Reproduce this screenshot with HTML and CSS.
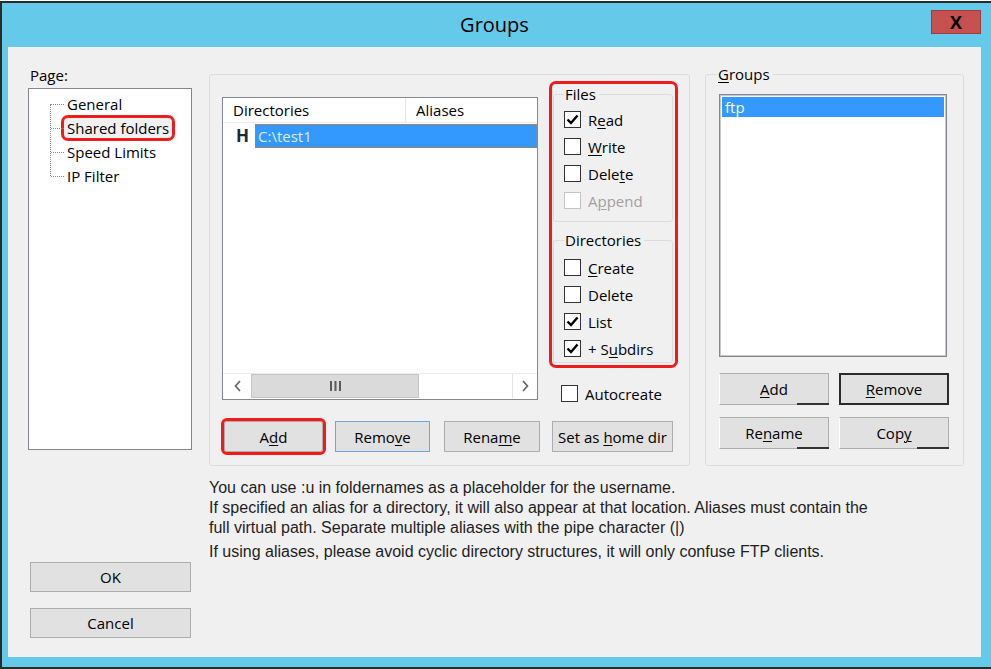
FILE: index.html
```html
<!DOCTYPE html>
<html lang="en">
<head>
  <meta charset="UTF-8" />
  <meta name="viewport" content="width=device-width, initial-scale=1.0"/>
  <title>Groups</title>
  <link rel="stylesheet" href="styles.css">
</head>
<body>
  <div class="window">
    <div class="titlebar">
      <span class="title">Groups</span>
      <button class="close">X</button>
    </div>

    <div class="client">
      <!-- page tree + dialog buttons -->
      <div class="sidebar">
        <div class="page-label">Page:</div>
        <div class="tree">
          <ul>
            <li>General</li>
            <li><span class="current marked">Shared folders</span></li>
            <li>Speed Limits</li>
            <li>IP Filter</li>
          </ul>
        </div>
        <button class="btn ok">OK</button>
        <button class="btn cancel">Cancel</button>
      </div>

      <div class="main">
        <div class="panels">
          <!-- shared folders page -->
          <div class="box folders">
            <div class="folders-top">
              <div class="listview">
                <div class="lv-head">
                  <div class="col dir">Directories</div>
                  <div class="col alias">Aliases</div>
                </div>
                <div class="lv-body">
                  <div class="lv-row">
                    <span class="home">H</span>
                    <span class="cell selected">C:\test1</span>
                  </div>
                </div>
                <div class="hscroll">
                  <span class="sb-arrow">
                    <svg width="8" height="12" viewBox="0 0 8 12"><polyline points="6,1 1.5,6 6,11" fill="none" stroke="#606060" stroke-width="1.6"/></svg>
                  </span>
                  <span class="sb-thumb">
                    <svg width="11" height="10" viewBox="0 0 11 10"><rect x="0" y="0" width="2" height="10" fill="#5a5a5a"/><rect x="4.5" y="0" width="2" height="10" fill="#5a5a5a"/><rect x="9" y="0" width="2" height="10" fill="#5a5a5a"/></svg>
                  </span>
                  <span class="sb-track"></span>
                  <span class="sb-arrow right">
                    <svg width="8" height="12" viewBox="0 0 8 12"><polyline points="2,1 6.5,6 2,11" fill="none" stroke="#606060" stroke-width="1.6"/></svg>
                  </span>
                </div>
              </div>

              <div class="side">
                <div class="perms marked">
                  <fieldset class="perm-group files">
                    <legend>Files</legend>
                    <label class="check"><span class="cb"><svg width="15" height="15" viewBox="0 0 15 15"><polyline points="2.5,7.5 6,11 12.5,3.5" fill="none" stroke="#000" stroke-width="2.4"/></svg></span>R<u>e</u>ad</label>
                    <label class="check"><span class="cb"></span><u>W</u>rite</label>
                    <label class="check"><span class="cb"></span>Dele<u>t</u>e</label>
                    <label class="check disabled"><span class="cb"></span>A<u>p</u>pend</label>
                  </fieldset>
                  <fieldset class="perm-group dirs">
                    <legend>Directories</legend>
                    <label class="check"><span class="cb"></span><u>C</u>reate</label>
                    <label class="check"><span class="cb"></span>Delete</label>
                    <label class="check"><span class="cb"><svg width="15" height="15" viewBox="0 0 15 15"><polyline points="2.5,7.5 6,11 12.5,3.5" fill="none" stroke="#000" stroke-width="2.4"/></svg></span>List</label>
                    <label class="check"><span class="cb"><svg width="15" height="15" viewBox="0 0 15 15"><polyline points="2.5,7.5 6,11 12.5,3.5" fill="none" stroke="#000" stroke-width="2.4"/></svg></span>+ S<u>u</u>bdirs</label>
                  </fieldset>
                </div>
                <label class="check autocreate"><span class="cb"></span>Autocreate</label>
              </div>
            </div>

            <div class="folder-buttons">
              <button class="btn add marked">A<u>d</u>d</button>
              <button class="btn remove">Remo<u>v</u>e</button>
              <button class="btn rename">Rena<u>m</u>e</button>
              <button class="btn home-dir">Set as <u>h</u>ome dir</button>
            </div>
          </div>

          <!-- group list -->
          <fieldset class="box groups">
            <legend><u>G</u>roups</legend>
            <div class="listbox">
              <div class="lb-item selected">ftp</div>
            </div>
            <div class="group-buttons">
              <button class="btn stale"><u>A</u>dd</button>
              <button class="btn default"><u>R</u>emove</button>
              <button class="btn stale">Re<u>n</u>ame</button>
              <button class="btn stale">Cop<u>y</u></button>
            </div>
          </fieldset>
        </div>

        <div class="notes">
          <p>You can use :u in foldernames as a placeholder for the username.</p>
          <p>If specified an alias for a directory, it will also appear at that location. Aliases must contain the full virtual path. Separate multiple aliases with the pipe character (|)</p>
          <p class="gap">If using aliases, please avoid cyclic directory structures, it will only confuse FTP clients.</p>
        </div>
      </div>
    </div>
  </div>
</body>
</html>
```

FILE: styles.css
```css
body {
  margin: 0;
  background: #fff;
  font-family: "Open Sans", sans-serif;
  font-size: 15px;
  color: #000;
}
.window {
  box-sizing: border-box;
  width: 991px;
  height: 668px;
  margin-top: 1px;
  background: #65c9ea;
  border-top: 2px solid #2b2b2b;
  border-left: 2px solid #2b2b2b;
  border-bottom: 2px solid #2b2b2b;
  padding: 0 10px 10px 6px;
}
.titlebar {
  height: 44px;
  display: grid;
  grid-template-columns: 1fr auto 1fr;
}
.title {
  grid-column: 2;
  font-size: 20px;
  line-height: 44px;
}
.close {
  grid-column: 3;
  justify-self: end;
  align-self: start;
  width: 50px;
  height: 24px;
  margin-top: 7px;
  padding: 0;
  background: #c75050;
  border: 1px solid #a13c3c;
  font-family: "Open Sans", sans-serif;
  font-weight: bold;
  font-size: 18px;
  line-height: 20px;
  color: #000;
}
.client {
  box-sizing: border-box;
  height: 610px;
  background: #f0f0f0;
  display: flex;
  gap: 17px;
  padding: 18px 17px 19px 20px;
}
button {
  font-family: "Open Sans", sans-serif;
  font-size: 15px;
  color: #000;
}
.btn {
  display: block;
  box-sizing: border-box;
  padding: 0;
  background: #e1e1e1;
  border: 1px solid #adadad;
}
u {
  text-decoration-thickness: 1px;
  text-underline-offset: 2px;
}
.marked {
  outline: 3px solid #f01c1c;
  border-radius: 4px;
}

/* sidebar */
.sidebar {
  width: 164px;
  flex-shrink: 0;
}
.page-label {
  line-height: 20px;
  padding-left: 2px;
}
.tree {
  box-sizing: border-box;
  height: 362px;
  margin-top: 3px;
  padding-top: 3px;
  background: #fff;
  border: 1px solid #828790;
}
.tree ul {
  list-style: none;
  margin: 0;
  padding: 0 0 0 38px;
  position: relative;
}
.tree ul::before {
  content: "";
  position: absolute;
  left: 21px;
  top: 12px;
  height: 72px;
  border-left: 1px dotted #8a8a8a;
}
.tree li {
  line-height: 24px;
  position: relative;
}
.tree li::before {
  content: "";
  position: absolute;
  left: -16px;
  top: 12px;
  width: 13px;
  border-top: 1px dotted #8a8a8a;
}
.tree .current {
  display: inline-block;
  line-height: 20px;
  padding: 0 3px;
  margin-left: -3px;
  background: #f0f0f0;
}
.ok {
  width: 161px;
  height: 30px;
  margin: 112px 0 0 2px;
}
.cancel {
  width: 161px;
  height: 30px;
  margin: 16px 0 0 2px;
}

/* main area */
.main {
  flex: 1;
  display: flex;
  flex-direction: column;
}
.panels {
  display: flex;
  gap: 15px;
  height: 401px;
}
.box {
  box-sizing: border-box;
  border: 1px solid #dcdcdc;
  border-radius: 3px;
  margin: 0;
}
.folders {
  width: 481px;
  margin-top: 9px;
  padding: 8px 0 0 12px;
}
.folders-top {
  display: flex;
}
.listview {
  box-sizing: border-box;
  width: 316px;
  height: 303px;
  margin-top: 14px;
  background: #fff;
  border: 1px solid #828790;
  display: flex;
  flex-direction: column;
}
.lv-head {
  display: flex;
  height: 24px;
  border-bottom: 1px solid #ececec;
}
.lv-head .col {
  line-height: 24px;
  padding-left: 10px;
}
.lv-head .dir {
  width: 172px;
  border-right: 1px solid #e5e5e5;
}
.lv-body {
  flex: 1;
  padding-top: 1px;
}
.lv-row {
  display: flex;
  height: 24px;
}
.home {
  width: 32px;
  box-sizing: border-box;
  padding-left: 13px;
  font-weight: bold;
  font-size: 17px;
  line-height: 24px;
  color: #1b2838;
}
.cell.selected {
  flex: 1;
  box-sizing: border-box;
  background: #3399ff;
  color: #dcecff;
  border: 1px dotted #a88660;
  padding-left: 2px;
  line-height: 22px;
}
.hscroll {
  display: flex;
  height: 24px;
  padding: 0 0 1px 2px;
  border-top: 1px solid #ececec;
}
.sb-arrow {
  width: 25px;
  display: flex;
  align-items: center;
  justify-content: center;
  background: #fff;
}
.sb-arrow.right {
  width: 24px;
  border-left: 1px solid #e4e4e4;
}
.sb-thumb {
  width: 168px;
  box-sizing: border-box;
  margin-left: 1px;
  background: #dadada;
  border: 1px solid #c4c4c4;
  display: flex;
  align-items: center;
  justify-content: center;
}
.sb-track {
  flex: 1;
  background: #fff;
}

/* permission checkboxes */
.side {
  margin-left: 14px;
  width: 123px;
}
.perms {
  height: 281px;
}
.perm-group {
  box-sizing: border-box;
  width: 120px;
  margin: 0 0 0 1px;
  border: 1px solid #dcdcdc;
  border-radius: 3px;
  padding: 2px 0 7px 10px;
  min-width: 0;
}
.perm-group legend {
  padding: 0 3px 0 1px;
  line-height: 20px;
}
.perm-group.files {
  margin-top: 1px;
}
.perm-group.dirs {
  margin-top: 8px;
  padding: 4px 0 0 10px;
}
.check {
  display: flex;
  align-items: center;
  height: 27px;
}
.cb {
  box-sizing: border-box;
  width: 17px;
  height: 17px;
  margin-right: 7px;
  background: #fff;
  border: 1px solid #333;
  display: flex;
  align-items: center;
  justify-content: center;
}
.check.disabled {
  color: #a0a0a0;
}
.check.disabled .cb {
  border-color: #c4c4c4;
}
.autocreate {
  height: 17px;
  margin: 20px 0 0 9px;
}

.folder-buttons {
  display: flex;
  margin-top: 19px;
}
.folder-buttons .btn {
  height: 31px;
}
.add {
  width: 99px;
  margin-left: 2px;
  border-radius: 3px;
}
.remove {
  width: 95px;
  margin-left: 12px;
  border-color: #6fa5dc;
}
.rename {
  width: 96px;
  margin-left: 14px;
}
.home-dir {
  width: 121px;
  margin-left: 12px;
}

/* groups list */
.groups {
  width: 259px;
  padding: 11px 0 0 13px;
  min-width: 0;
}
.groups legend {
  margin-left: -2px;
  padding: 0 3px 0 1px;
  line-height: 18px;
}
.listbox {
  box-sizing: border-box;
  width: 228px;
  height: 263px;
  background: #fff;
  border: 1px solid #828790;
  box-shadow: inset 0 0 0 1px #c8c8c8;
  padding: 2px;
}
.lb-item {
  line-height: 20px;
  padding-left: 3px;
}
.lb-item.selected {
  background: #3399ff;
  color: #fff;
}
.group-buttons {
  display: grid;
  grid-template-columns: 110px 110px;
  gap: 12px 10px;
  margin-top: 16px;
}
.group-buttons .btn {
  height: 32px;
}
.btn.default {
  border: 2px solid #2b2b2b;
}
.btn.stale {
  position: relative;
  border-left-color: #fff;
}
.btn.stale::after {
  content: "";
  position: absolute;
  right: -1px;
  bottom: -1px;
  width: 30%;
  height: 2px;
  background: #333;
}

/* help text */
.notes {
  margin-top: 12px;
  font-family: "Liberation Sans", Arial, sans-serif;
  font-size: 16px;
  line-height: 20px;
  color: #1e1e1e;
  width: 660px;
}
.notes p {
  margin: 0;
}
.notes .gap {
  margin-top: 4px;
}
```
